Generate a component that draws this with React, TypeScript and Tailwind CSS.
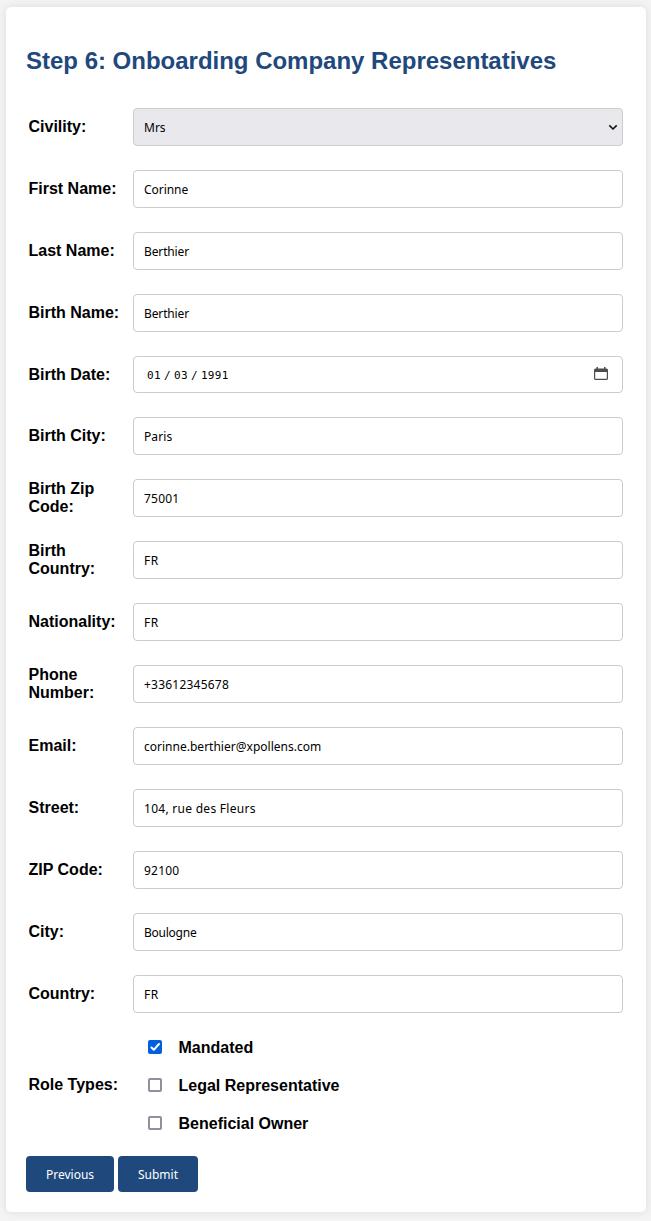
import { useState } from "react";

type Field = { label: string; value: string; tracking?: string; kind?: "select" | "date" };

const fields: Field[] = [
  { label: "Civility:", value: "Mrs", kind: "select" },
  { label: "First Name:", value: "Corinne", tracking: "tracking-[-0.05px]" },
  { label: "Last Name:", value: "Berthier", tracking: "tracking-[-0.13px]" },
  { label: "Birth Name:", value: "Berthier", tracking: "tracking-[-0.13px]" },
  { label: "Birth Date:", value: "01 / 03 / 1991", kind: "date" },
  { label: "Birth City:", value: "Paris", tracking: "tracking-[0.1px]" },
  { label: "Birth Zip Code:", value: "75001", tracking: "tracking-[0.22px]" },
  { label: "Birth Country:", value: "FR", tracking: "tracking-[0.5px]" },
  { label: "Nationality:", value: "FR", tracking: "tracking-[0.5px]" },
  { label: "Phone Number:", value: "+33612345678", tracking: "tracking-[0.22px]" },
  { label: "Email:", value: "corinne.berthier@xpollens.com", tracking: "tracking-[0.01px]" },
  { label: "Street:", value: "104, rue des Fleurs", tracking: "tracking-[0.28px]" },
  { label: "ZIP Code:", value: "92100", tracking: "tracking-[0.22px]" },
  { label: "City:", value: "Boulogne", tracking: "tracking-[-0.25px]" },
  { label: "Country:", value: "FR", tracking: "tracking-[0.5px]" },
];

const valueFont = "font-['Noto_Sans',sans-serif] text-[12px]";

function Control({ field }: { field: Field }) {
  if (field.kind === "select") {
    return (
      <div className="flex h-[38px] w-[490px] items-center justify-between rounded border border-[#ccc] bg-[#e9e9ed] pl-[10px] pr-[4px]">
        <span className={`pt-px ${valueFont}`}>{field.value}</span>
        <svg width="10" height="8" viewBox="0 0 10 8" fill="none" stroke="#111" strokeWidth="1.6">
          <path d="M1.300 2.400 5 6 8.700 2.400" />
        </svg>
      </div>
    );
  }
  if (field.kind === "date") {
    return (
      <div className="flex h-[37px] w-[490px] items-center justify-between rounded border border-[#ccc] bg-white pl-[13px] pr-[14px]">
        <span className="flex gap-[4px] pt-[2px] font-['DejaVu_Sans_Mono',monospace] text-[11px] leading-4 tracking-[0.35px]">
          <span>01</span><span className="-mx-px">/</span><span>03</span><span className="-mx-px">/</span><span>1991</span>
        </span>
        <svg className="-mt-px" width="14" height="14" viewBox="0 0 14 14" fill="#4d4d50">
          <path fillRule="evenodd" d="M2.5 0H4v1.4h6V0h1.500v1.400h1A1.500 1.500 0 0 1 14 2.900v8.600a1.500 1.500 0 0 1-1.500 1.500h-11A1.500 1.500 0 0 1 0 11.500V2.900a1.500 1.500 0 0 1 1.500-1.500h1ZM1.200 5v6.300a.5.5 0 0 0 .5.5h10.600a.5.5 0 0 0 .5-.5V5Z" />
        </svg>
      </div>
    );
  }
  return (
    <input
      className={`block h-[38px] w-[490px] rounded border border-[#ccc] bg-white px-[10px] pt-px outline-none ${valueFont} ${field.tracking}`}
      defaultValue={field.value}
      aria-label={field.label}
    />
  );
}

export default function App() {
  const [roles, setRoles] = useState([
    { name: "Mandated", on: true },
    { name: "Legal Representative", on: false },
    { name: "Beneficial Owner", on: false },
  ]);
  const toggle = (i: number) => setRoles(roles.map((r, j) => (j === i ? { ...r, on: !r.on } : r)));

  return (
    <div className="h-[1221px] overflow-hidden bg-[#f4f4f4] pl-[6px] pt-[7px] font-['Liberation_Sans',Arial,sans-serif] text-black">
      <form
        className="h-[1205px] w-[640px] rounded-[5px] bg-white px-5 pt-10 shadow-[0_0_10px_rgba(0,0,0,0.1)]"
        onSubmit={(e) => e.preventDefault()}
      >
        <h2 className="text-2xl leading-[28px] font-bold tracking-[-0.01px] text-[#1f497d]">Step 6: Onboarding Company Representatives</h2>
        <div className="mt-[33px] flex flex-col gap-6">
          {fields.map((f) => (
            <div key={f.label} className="flex items-center">
              <div className="-my-2 w-[107px] pr-2 pl-[2.5px] text-base leading-[18px] font-bold">{f.label}</div>
              <Control field={f} />
            </div>
          ))}
        </div>
        <div className="mt-[15px] flex items-center">
          <div className="w-[122px] pl-[2.5px] text-base leading-[18px] font-bold">Role Types:</div>
          <div className="flex flex-col">
            {roles.map((r, i) => (
              <label key={r.name} className="flex h-[38px] items-center text-base font-bold">
                <input type="checkbox" className="sr-only" checked={r.on} onChange={() => toggle(i)} />
                {r.on ? (
                  <span className="flex size-[14px] items-center justify-center rounded-[2px] bg-[#0060df]">
                    <svg width="14" height="14" viewBox="0 0 14 14" fill="none" stroke="#fff" strokeWidth="2" strokeLinecap="round" strokeLinejoin="round">
                      <path d="M3.500 7.500 5.800 9.800 11 4" />
                    </svg>
                  </span>
                ) : (
                  <span className="size-[14px] rounded-[2px] border-2 border-[#8f8f9d] bg-white" />
                )}
                <span className="ml-[16.5px] pt-px">{r.name}</span>
              </label>
            ))}
          </div>
        </div>
        <div className="mt-[14px] flex gap-1 font-['Noto_Sans',sans-serif] text-[12px] text-white">
          <button type="button" className="h-9 w-[88px] rounded bg-[#1f497d] pt-px">Previous</button>
          <button type="submit" className="h-9 w-20 rounded bg-[#1f497d] pt-px">Submit</button>
        </div>
      </form>
    </div>
  );
}
